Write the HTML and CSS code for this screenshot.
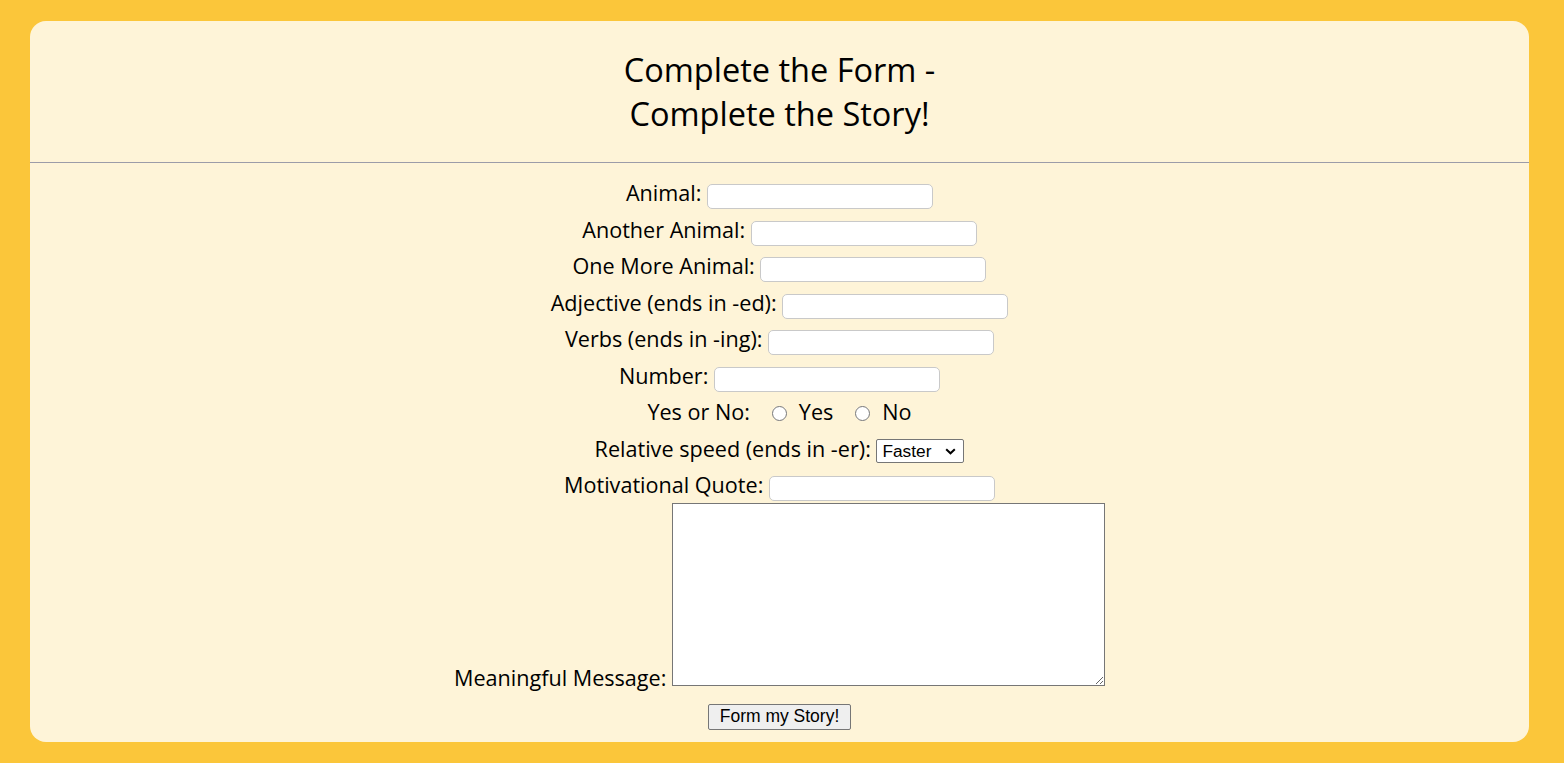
FILE: index.html
```html
<!DOCTYPE html>
<html lang="en">
<head>
<meta charset="utf-8">
<title>Complete the Form</title>
<link rel="stylesheet" href="styles.css">
</head>
<body>
<main class="card">
  <h1 class="title">Complete the Form -<br>Complete the Story!</h1>
  <hr class="rule">
  <form class="form">
    <div class="row"><label for="a1">Animal:</label> <input id="a1" class="text" type="text"></div>
    <div class="row"><label for="a2">Another Animal:</label> <input id="a2" class="text" type="text"></div>
    <div class="row"><label for="a3">One More Animal:</label> <input id="a3" class="text" type="text"></div>
    <div class="row"><label for="adj">Adjective (ends in -ed):</label> <input id="adj" class="text" type="text"></div>
    <div class="row"><label for="vb">Verbs (ends in -ing):</label> <input id="vb" class="text" type="text"></div>
    <div class="row"><label for="num">Number:</label> <input id="num" class="text" type="text"></div>
    <div class="row"><span class="yn">Yes or No:</span><input class="radio" type="radio" name="yn" id="yes"><label for="yes">Yes</label><input class="radio radio-2" type="radio" name="yn" id="no"><label for="no">No</label></div>
    <div class="row"><label for="sp">Relative speed (ends in -er):</label> <span class="select-wrap"><select id="sp" class="select"><option>Faster</option><option>Slower</option></select><svg class="chev" width="11" height="7" viewBox="0 0 11 7"><path d="M1.2 1.2 L5.5 5.3 L9.8 1.2" fill="none" stroke="#000" stroke-width="2"/></svg></span></div>
    <div class="row"><label for="mq">Motivational Quote:</label> <input id="mq" class="text" type="text"></div>
    <div class="row row-area"><label for="mm">Meaningful Message:</label> <textarea id="mm" class="area"></textarea></div>
    <div class="actions"><button type="button" class="btn">Form my Story!</button></div>
  </form>
</main>
</body>
</html>
```
FILE: styles.css
```css
html, body {
  margin: 0;
  padding: 0;
}
body {
  background: #fbc63a;
  padding: 21px 35px 21px 30px;
  font-family: "Open Sans", "Noto Sans", sans-serif;
  color: #000;
}
.card {
  background: #fef4d8;
  border-radius: 16px;
  padding: 0 0 12px;
}
.title {
  margin: 0;
  padding: 27px 0 26px;
  font-size: 32.5px;
  font-weight: 500;
  line-height: 44px;
  text-align: center;
}
.rule {
  margin: 0;
  border: 0;
  border-top: 1px solid #9c9ca8;
  height: 0;
}
.form {
  padding-top: 15px;
  text-align: center;
  font-size: 21.6px;
}
.row {
  line-height: 29px;
  height: 31px;
  margin-bottom: 5.5px;
}
.text {
  width: 226px;
  height: 25px;
  box-sizing: border-box;
  border: 1px solid #c9c9c9;
  border-radius: 5px;
  background: #fff;
  font-size: 13.33px;
  padding: 1px 4px;
  margin: 0;
}
.yn {
  margin-right: 19px;
}
.radio {
  width: 15px;
  height: 15px;
  margin: 0 12px 0 3px;
  vertical-align: -1px;
}
.radio-2 {
  margin-left: 22px;
}
.select-wrap {
  position: relative;
  display: inline-block;
  line-height: 0;
}
.select {
  appearance: none;
  -webkit-appearance: none;
  font-family: "Liberation Sans", Arial, sans-serif;
  font-size: 17.3px;
  line-height: 22px;
  height: 24px;
  width: 88px;
  box-sizing: border-box;
  margin: 0;
  padding: 0 0 0 5px;
  border: 1px solid #767676;
  border-radius: 2px;
  background: #fff;
  color: #000;
}
.chev {
  position: absolute;
  right: 8px;
  top: 9px;
  pointer-events: none;
}
.row-area {
  height: auto;
  margin-top: -4px;
  margin-bottom: 0;
}
.area {
  width: 433px;
  height: 183px;
  box-sizing: border-box;
  border: 1px solid #767676;
  background: #fff;
  margin: 0;
  vertical-align: baseline;
}
.actions {
  margin-top: 12px;
  line-height: 0;
}
.btn {
  font-family: "Liberation Sans", Arial, sans-serif;
  font-size: 17.5px;
  padding: 0 6px;
  height: 26px;
  width: 143px;
  border: 1px solid #767676;
  border-radius: 2px;
  background: #efefef;
  color: #000;
}
```
